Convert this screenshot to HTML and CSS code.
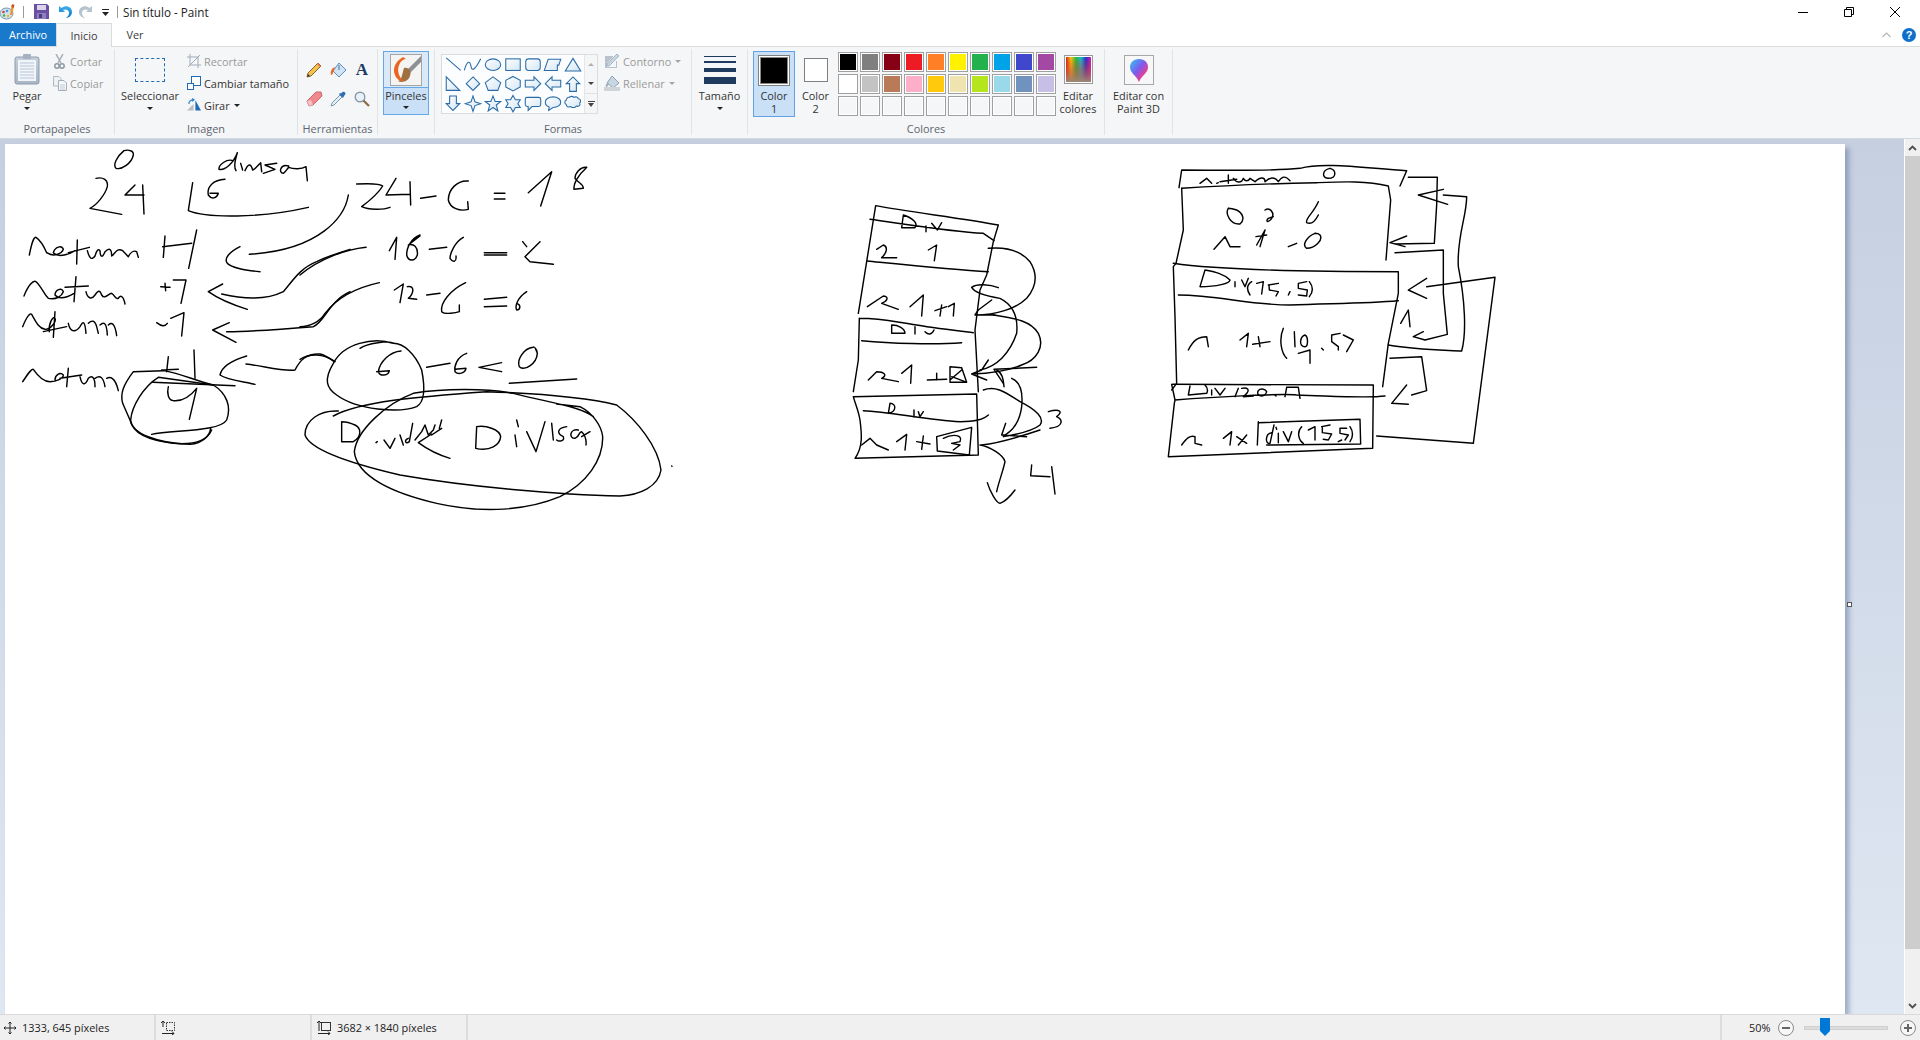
FILE: index.html
```html
<!DOCTYPE html>
<html lang="es">
<head>
<meta charset="utf-8">
<title>Sin título - Paint</title>
<link rel="stylesheet" href="styles.css">
</head>
<body>
<svg class="defs" width="0" height="0">
  <defs>
    <linearGradient id="shp" x1="0" y1="0" x2="1" y2="1"><stop offset="0" stop-color="#ffffff"/><stop offset="1" stop-color="#d4e6f4"/></linearGradient>
    <linearGradient id="clip" x1="0" y1="0" x2="0" y2="1"><stop offset="0" stop-color="#c4cfdc"/><stop offset="1" stop-color="#a8b6c6"/></linearGradient>
    <linearGradient id="spec" x1="0" y1="0" x2="0" y2="1"><stop offset="0" stop-color="#ff0000" stop-opacity="0"/><stop offset="1" stop-color="#9a8a78"/></linearGradient>
    <linearGradient id="rainbow" x1="0" y1="0" x2="1" y2="0"><stop offset="0" stop-color="#e02020"/><stop offset=".2" stop-color="#f0d010"/><stop offset=".4" stop-color="#20c040"/><stop offset=".6" stop-color="#10c0d0"/><stop offset=".8" stop-color="#2030d0"/><stop offset="1" stop-color="#d020c0"/></linearGradient>
    <linearGradient id="balloon" x1="0" y1="0" x2="1" y2="1"><stop offset="0" stop-color="#30c8f0"/><stop offset=".45" stop-color="#7a5cf0"/><stop offset=".75" stop-color="#f03c90"/><stop offset="1" stop-color="#f08a20"/></linearGradient>
    <linearGradient id="blueA" x1="0" y1="0" x2="0" y2="1"><stop offset="0" stop-color="#3db0ee"/><stop offset="1" stop-color="#0e76c8"/></linearGradient>
  </defs>
</svg>

<header class="titlebar">
  <svg class="ti" width="16" height="16" viewBox="0 0 16 16"><ellipse cx="6.5" cy="9.5" rx="6.5" ry="5.5" fill="#cfe3ee" stroke="#7b97ab"/><circle cx="3.5" cy="8" r="1.3" fill="#d8413a"/><circle cx="7" cy="7" r="1.3" fill="#3d9be0"/><circle cx="4" cy="11.5" r="1.3" fill="#4cb050"/><circle cx="8" cy="12" r="1.2" fill="#f0b020"/><path d="M13 1L11 11" stroke="#e9963a" stroke-width="2.4"/><path d="M13.4 .5l-1 3" stroke="#c0552a" stroke-width="2.4"/></svg>
  <span class="qsep qsep-a"></span>
  <svg class="save" width="15" height="15" viewBox="0 0 15 15"><path d="M0 0H13L15 2V15H0Z" fill="#6a4fa3"/><rect x="3" y="1" width="9" height="5" fill="#d9d4ea"/><rect x="3" y="9" width="9" height="6" fill="#8f7fbe"/><rect x="5" y="10" width="3" height="4" fill="#4b3a80"/></svg>
  <svg class="undo" width="14" height="14" viewBox="0 0 14 14"><path d="M1 1V7H7L5 5C8 3.500 11 5 11 8C11 10 10 11.500 8 13C12 12.500 14 10 14 7C14 2 8 -.5 3.500 3Z" fill="url(#blueA)"/></svg>
  <svg class="redo" width="14" height="14" viewBox="0 0 14 14"><path d="M13 1V7H7L9 5C6 3.500 3 5 3 8C3 10 4 11.500 6 13C2 12.500 0 10 0 7C0 2 6 -.5 10.500 3Z" fill="#b7c4d0"/></svg>
  <svg class="qdrop" width="7" height="7" viewBox="0 0 7 7"><path d="M0 0H7V1H0ZM0 3H7L3.500 7Z" fill="#222"/></svg>
  <span class="qsep qsep-b"></span>
  <span class="wintitle">Sin título - Paint</span>
  <div class="winctl">
    <svg width="10" height="10" viewBox="0 0 10 10"><path d="M0 5.500H10" stroke="#000" fill="none"/></svg>
    <svg width="10" height="10" viewBox="0 0 10 10"><path d="M.5 2.500H7.500V9.500H.5ZM2.500 2.500V.5H9.500V7.500H7.500" stroke="#000" fill="none"/></svg>
    <svg width="10" height="10" viewBox="0 0 10 10"><path d="M0 0L10 10M10 0L0 10" stroke="#000" fill="none"/></svg>
  </div>
</header>

<nav class="tabs">
  <span class="tab tab-file">Archivo</span>
  <span class="tab tab-on">Inicio</span>
  <span class="tab tab-off">Ver</span>
  <div class="help-wrap">
    <svg width="9" height="6" viewBox="0 0 9 6"><path d="M.5 5L4.500 1L8.500 5" stroke="#b5b5b5" fill="none" stroke-width="1.200"/></svg>
    <span class="help">?</span>
  </div>
</nav>

<section class="ribbon">
  <div class="group g-clip">
    <div class="g-body">
      <div class="big b-pegar">
        <div class="big-ico">
          <svg width="26" height="31" viewBox="0 0 26 31"><rect x="1" y="3" width="24" height="27" rx="2" fill="url(#clip)" stroke="#8d9cae"/><rect x="4" y="6" width="18" height="21" fill="#f1f5fa"/><path d="M6 9H20M6 12H20M6 15H20M6 18H20M6 21H20M6 24H20" stroke="#b9c7d6"/><rect x="9" y="0" width="8" height="5" rx="1" fill="#a5b2c1"/></svg>
        </div>
        <span class="blabel">Pegar</span>
        <i class="caret"></i>
      </div>
      <div class="smalls s-clip">
        <div class="sm dis"><svg width="14" height="15" viewBox="0 0 14 15"><path d="M3 0L8 9M10 0L5 9" stroke="#a3aeb9" stroke-width="1.500" fill="none"/><circle cx="4" cy="12" r="2.200" fill="none" stroke="#8c98a5" stroke-width="1.500"/><circle cx="9" cy="12" r="2.200" fill="none" stroke="#8c98a5" stroke-width="1.500"/></svg><span>Cortar</span></div>
        <div class="sm dis"><svg width="14" height="15" viewBox="0 0 14 15"><path d="M.5.5H6L8 2.500V10H.5Z" fill="#eef1f5" stroke="#aeb8c3"/><path d="M5.500 4.500H11L13.500 7V14.500H5.500Z" fill="#f5f7f9" stroke="#a3aeb9"/><path d="M7 9H12M7 11H12M7 13H12" stroke="#c3ccd5"/></svg><span>Copiar</span></div>
      </div>
    </div>
    <div class="g-label">Portapapeles</div>
  </div>

  <div class="group g-img">
    <div class="g-body">
      <div class="big b-sel">
        <div class="big-ico"><span class="dashbox"></span></div>
        <span class="blabel">Seleccionar</span>
        <i class="caret"></i>
      </div>
      <div class="smalls s-img">
        <div class="sm dis"><svg width="14" height="14" viewBox="0 0 14 14"><path d="M3 0V11H14M0 3H11V14M1 13L13 1" stroke="#9fabb7" fill="none"/></svg><span>Recortar</span></div>
        <div class="sm"><svg width="14" height="14" viewBox="0 0 14 14"><rect x="4.500" y=".5" width="9" height="9" fill="#fff" stroke="#1f6bb5"/><rect x=".5" y="7.500" width="6" height="6" fill="#fff" stroke="#1f6bb5"/></svg><span>Cambiar tamaño</span></div>
        <div class="sm"><svg width="15" height="14" viewBox="0 0 15 14"><path d="M0 13L7 6V13Z" fill="#b9bec4"/><path d="M9 2L15 13H9Z" fill="#1f6bb5"/><path d="M2 6C2 3 4 1.500 7 1.500M5.500 0L7.500 1.500L5.500 3" stroke="#2f85d0" fill="none" stroke-width="1.300"/></svg><span>Girar</span><i class="caret caret-in"></i></div>
      </div>
    </div>
    <div class="g-label">Imagen</div>
  </div>

  <div class="group g-tools">
    <div class="g-body tools">
      <svg width="16" height="16" viewBox="0 0 16 16"><path d="M1 15L2 11L12 1L15 4L5 14Z" fill="#f2c14f" stroke="#8b6a2a"/><path d="M11 2L14 5L15 4L12 1Z" fill="#e26a5e"/><path d="M1 15L2 12L4 14Z" fill="#333"/></svg>
      <svg width="16" height="16" viewBox="0 0 16 16"><path d="M9 1L16 8L9 15L3 9Z" fill="#cfe4f5" stroke="#5f8fb8"/><path d="M9 3V8" stroke="#3f6f9a"/><path d="M5 5C2 6 0 9 1 13C3 13 3 10 4 8Z" fill="#ea6a2a"/></svg>
      <span class="glyphA">A</span>
      <svg width="17" height="16" viewBox="0 0 17 16"><path d="M1 10L10 1H15L16 5L7 14L3 15Z" fill="#f0888c" stroke="#c76a6e"/><path d="M1 10L3 15L7 14L5 9Z" fill="#f4c0c2"/></svg>
      <svg width="16" height="16" viewBox="0 0 16 16"><path d="M10 4L12 6L4 14L1 15L2 12Z" fill="#e4eef6" stroke="#7d97ad"/><path d="M9 3L13 7L14 5L15.500 3C15.500 1 14 .5 12.500 1L11 2.500L10 2Z" fill="#2a6fb5"/></svg>
      <svg width="16" height="16" viewBox="0 0 16 16"><circle cx="6" cy="6" r="4.800" fill="#e6f1f9" stroke="#8a9aa8" stroke-width="1.400"/><path d="M9.500 9.500L15 15" stroke="#8a6a3f" stroke-width="2.200"/></svg>
    </div>
    <div class="g-label">Herramientas</div>
  </div>

  <div class="group g-brush">
    <div class="brushbtn">
      <div class="brush-top">
        <svg width="32" height="32" viewBox="0 0 32 32"><rect x=".5" y=".5" width="31" height="31" fill="#f4f4f2" stroke="#a5a5a5"/><path d="M31 2L17 16L20 19L31 8Z" fill="#8d9197"/><path d="M14 14C19 13 22 17 20 22C18 28 11 29 8 27C12 26 12 20 14 14Z" fill="#a0703f"/><path d="M13 3C6 7 2 14 5 21C7 26 10 27 14 27C9 24 6 16 10 9C11 7 14 5 16 5Z" fill="#ea6420"/></svg>
      </div>
      <div class="brush-bot"><span class="blabel">Pinceles</span><i class="caret"></i></div>
    </div>
  </div>

  <div class="group g-shapes">
    <div class="g-body">
      <div class="gallery">
        <div class="shapes">
          <svg class="sh" viewBox="0 0 20 20"><path d="M3 3L18 16"/></svg>
          <svg class="sh" viewBox="0 0 20 20"><path class="nf" d="M1 16C4 5 7 6 8 12C9 18 13 14 18 4"/></svg>
          <svg class="sh" viewBox="0 0 20 20"><ellipse cx="10" cy="10" rx="8" ry="6"/></svg>
          <svg class="sh" viewBox="0 0 20 20"><rect x="2.500" y="4" width="15" height="12"/></svg>
          <svg class="sh" viewBox="0 0 20 20"><rect x="2.500" y="4" width="15" height="12" rx="3"/></svg>
          <svg class="sh" viewBox="0 0 20 20"><path d="M1 16L5 4.500H18L16 10.500H14.500V16Z"/></svg>
          <svg class="sh" viewBox="0 0 20 20"><path d="M10 3.500L18 16.500H2Z"/></svg>

          <svg class="sh" viewBox="0 0 20 20"><path d="M3 3V17H17Z"/></svg>
          <svg class="sh" viewBox="0 0 20 20"><path d="M10 3L17 10L10 17L3 10Z"/></svg>
          <svg class="sh" viewBox="0 0 20 20"><path d="M10 3L18 9L15 17H5L2 9Z"/></svg>
          <svg class="sh" viewBox="0 0 20 20"><path d="M10 2.500L17.500 6.500V13.500L10 17.500L2.500 13.500V6.500Z"/></svg>
          <svg class="sh" viewBox="0 0 20 20"><path d="M2 6.500H11V3L18 10L11 17V13.500H2Z"/></svg>
          <svg class="sh" viewBox="0 0 20 20"><path d="M18 6.500H9V3L2 10L9 17V13.500H18Z"/></svg>
          <svg class="sh" viewBox="0 0 20 20"><path d="M6.500 18V10H3L10 3L17 10H13.500V18Z"/></svg>

          <svg class="sh" viewBox="0 0 20 20"><path d="M6.500 2V10H3L10 17L17 10H13.500V2Z"/></svg>
          <svg class="sh" viewBox="0 0 20 20"><path d="M10 2L12 8L18 10L12 12L10 18L8 12L2 10L8 8Z"/></svg>
          <svg class="sh" viewBox="0 0 20 20"><path d="M10 2L12.200 7.800H18L13.400 11.400L15 17.500L10 14L5 17.500L6.600 11.400L2 7.800H7.800Z"/></svg>
          <svg class="sh" viewBox="0 0 20 20"><path d="M10 1.500L12.500 6H17.500L15 10L17.500 14H12.500L10 18.500L7.500 14H2.500L5 10L2.500 6H7.500Z"/></svg>
          <svg class="sh" viewBox="0 0 20 20"><path d="M4 3.500H16Q18 3.500 18 5.500V11Q18 13 16 13H9L5 17V13H4Q2 13 2 11V5.500Q2 3.500 4 3.500Z"/></svg>
          <svg class="sh" viewBox="0 0 20 20"><path d="M10 3C15 3 18 5.500 18 8.500C18 11.500 15 14 10 14L5.500 17L6 13.500C3.500 12.500 2 10.500 2 8.500C2 5.500 5 3 10 3Z"/></svg>
          <svg class="sh" viewBox="0 0 20 20"><path d="M6 3.500C8 2 10 2.500 11 3.500C13 2.500 15 3 15.500 5C18 5 18.500 8 17 9.500C18 12 15.500 13.500 13.500 12.500C12 14.500 9 14.500 7.500 13C5.500 14 3 13 3 11C1 10 1 7 3 6.500C3 4.500 5 3 6 3.500Z"/></svg>
        </div>
        <div class="gal-scroll">
          <span class="gs"><i class="tri-up"></i></span>
          <span class="gs"><i class="tri-dn"></i></span>
          <span class="gs gs-last"><i class="tri-bar"></i></span>
        </div>
      </div>
      <div class="smalls s-shape">
        <div class="sm dis sm16"><svg width="16" height="16" viewBox="0 0 16 16"><path d="M1 3H9V4L3 10V14H12V8H13V15H1Z" fill="#b9c2cc"/><path d="M3 11L13 1L15 3L5 13H3Z" fill="#c8d6e3" stroke="#8ea2b5" stroke-width=".7"/></svg><span>Contorno</span><i class="caret caret-in caret-dis"></i></div>
        <div class="sm dis sm16"><svg width="16" height="16" viewBox="0 0 16 16"><path d="M8 1L15 8L9 13L3 8Z" fill="#c8d6e3" stroke="#8ea2b5"/><path d="M0 12H16V16H0Z" fill="#cfd4d9"/><path d="M4 7C2 9 1 10 2 12C4 12 4 10 5 9Z" fill="#a5b0bb"/></svg><span>Rellenar</span><i class="caret caret-in caret-dis"></i></div>
      </div>
    </div>
    <div class="g-label">Formas</div>
  </div>

  <div class="group g-size">
    <div class="g-body">
      <div class="big b-size">
        <div class="big-ico"><div class="sizes"><i class="l1"></i><i class="l2"></i><i class="l3"></i><i class="l4"></i></div></div>
        <span class="blabel">Tamaño</span>
        <i class="caret"></i>
      </div>
    </div>
  </div>

  <div class="group g-colors">
    <div class="g-body">
      <div class="colorbtn on">
        <div class="big-ico c-ico"><span class="sw1"></span></div>
        <span class="blabel">Color<br>1</span>
      </div>
      <div class="colorbtn c2">
        <div class="big-ico c-ico"><span class="sw2"></span></div>
        <span class="blabel">Color<br>2</span>
      </div>
      <div class="palette">
        <i class="p c01"></i><i class="p c02"></i><i class="p c03"></i><i class="p c04"></i><i class="p c05"></i><i class="p c06"></i><i class="p c07"></i><i class="p c08"></i><i class="p c09"></i><i class="p c10"></i>
        <i class="p c11"></i><i class="p c12"></i><i class="p c13"></i><i class="p c14"></i><i class="p c15"></i><i class="p c16"></i><i class="p c17"></i><i class="p c18"></i><i class="p c19"></i><i class="p c20"></i>
        <i class="p"></i><i class="p"></i><i class="p"></i><i class="p"></i><i class="p"></i><i class="p"></i><i class="p"></i><i class="p"></i><i class="p"></i><i class="p"></i>
      </div>
      <div class="big b-edit">
        <div class="big-ico"><svg width="29" height="29" viewBox="0 0 29 29"><rect x=".5" y=".5" width="28" height="28" fill="#fff" stroke="#9a9a9a"/><rect x="2" y="2" width="25" height="25" fill="url(#rainbow)"/><rect x="2" y="2" width="25" height="25" fill="url(#spec)"/></svg></div>
        <span class="blabel">Editar<br>colores</span>
      </div>
    </div>
    <div class="g-label">Colores</div>
  </div>

  <div class="group g-3d">
    <div class="g-body">
      <div class="big b-3d">
        <div class="big-ico"><svg width="30" height="30" viewBox="0 0 30 30"><rect x=".5" y=".5" width="29" height="29" fill="#f7f7f7" stroke="#a8a8a8"/><path d="M15 4C21 4 24 8 24 12C24 18 18 20 15 27C12 20 6 18 6 12C6 8 9 4 15 4Z" fill="url(#balloon)"/></svg></div>
        <span class="blabel">Editar con<br>Paint 3D</span>
      </div>
    </div>
  </div>
</section>

<main class="workspace">
  <div class="viewport">
    <div class="canvas">
      <svg class="drawing" width="1840" height="870" viewBox="5 144 1840 870">
        <g class="ink" transform="translate(0 130) scale(.33333)">
          <path d="M372 62C350 80 338 105 348 115C365 120 395 100 400 75C402 62 385 58 372 62"/>
          <path d="M700 92C680 85 655 105 657 118C675 122 700 100 712 68C705 90 700 110 708 122M722 100L728 120M735 122C745 100 752 100 758 120C765 118 772 108 782 98L785 125M830 100L795 105L825 118L790 130M866 108C840 100 835 130 850 130C858 125 862 115 866 112C880 118 905 118 918 110L922 152"/>
          <path d="M288 145C310 140 325 150 322 170C315 195 290 225 270 235L365 253M405 165L375 195L432 195M428 165L432 252"/>
          <path d="M578 158L565 242C620 265 780 265 925 232M675 148C640 150 620 170 625 195C635 210 650 205 655 190L630 190"/>
          <path d="M1045 195C1035 260 960 360 748 373M720 350C690 365 670 385 682 400C700 415 740 422 780 425"/>
          <path d="M88 375C95 340 100 322 108 322C120 330 130 345 140 368C160 382 185 372 190 358C185 345 165 350 160 368C175 385 210 372 225 362M232 330L230 402M205 368L268 352M262 362C268 385 275 392 285 378C290 360 295 355 300 362C300 375 305 390 315 365C330 350 335 360 335 378C345 372 350 352 368 362L385 380C390 370 400 360 410 365L415 382"/>
          <path d="M488 350L575 340M495 318L490 382M590 300L566 415"/>
          <path d="M668 462L625 485C660 510 700 525 742 538M665 492C720 505 790 515 850 485C880 450 900 415 950 395C980 380 1010 370 1050 358"/>
          <path d="M72 498C85 465 100 450 108 455C125 470 130 490 145 505C170 510 185 498 190 485C185 470 165 480 165 495C180 512 205 500 222 490M228 440L222 515M195 472L265 468M258 485C262 505 275 510 285 495C295 480 300 480 305 495C315 510 325 490 335 490C345 495 345 510 355 505C360 495 370 495 375 522"/>
          <path d="M482 470L510 472M495 460L497 482M520 450L558 450L543 520"/>
          <path d="M688 578L638 600L708 637M680 605C760 605 880 595 940 590C975 575 985 515 1050 485"/>
          <path d="M68 590C80 560 90 548 95 553C105 570 115 595 135 598C150 600 170 575 165 565C160 555 145 580 148 605M165 545L160 622M130 605L200 590M205 580C210 605 225 610 240 590C250 570 255 575 258 610M265 580C275 570 285 570 290 590L295 610M300 585C310 575 320 575 322 615M325 585C335 575 345 580 350 617"/>
          <path d="M470 578C485 590 495 590 502 580M512 565L552 548L545 618"/>
          <path d="M68 755C85 730 95 715 100 718C115 740 130 755 150 755C170 755 190 745 190 735C180 725 165 735 165 750M205 715L200 770M180 745L245 735M240 740C245 765 255 770 265 745C275 735 285 740 285 770M285 745C300 735 310 740 315 770M320 745C330 740 345 740 355 782"/>
          <path d="M485 720L535 718M505 680L500 725M582 660L585 745M458 757L705 767"/>
          <path d="M740 678C700 690 665 710 660 735C680 750 730 755 765 763M738 702C790 708 850 725 885 720C900 690 920 670 960 672C975 675 990 685 1005 695"/>
          <path d="M400 725C370 765 360 790 368 820L390 870C400 910 440 930 520 940C580 945 620 935 635 900M400 725L490 722C540 730 580 750 640 765C680 790 695 830 680 870C660 905 520 900 455 913"/>
          <path d="M475 742C430 770 395 830 392 870C395 910 470 940 570 943C610 940 630 915 632 895M475 742L640 765"/>
          <path d="M505 770C500 790 505 810 520 812C550 815 570 800 590 775L568 868"/>
        </g>
        <g class="ink" transform="translate(300 130) scale(.33333)">
          <path d="M170 162C210 160 240 160 248 168C235 190 205 215 185 230C205 240 250 240 270 232M288 145L258 195L330 193M330 155L332 225M362 205L408 198"/>
          <path d="M505 153C470 150 445 180 445 210C450 235 480 245 505 238L503 215M583 190L615 190M583 207L615 207M685 188L755 125L722 228"/>
          <path d="M860 112C840 110 825 130 825 145C835 160 850 160 850 175L822 178C820 160 835 135 858 115"/>
          <path d="M268 362L290 322L285 388M360 315C335 325 320 350 320 375C325 395 345 395 352 375C355 350 340 340 325 345L360 318M388 358L440 352M490 322C465 335 450 370 450 385C460 400 470 395 468 378"/>
          <path d="M553 368L620 368M553 375L620 375M668 335L680 350M720 335L675 380L690 395L760 403"/>
          <path d="M283 480L310 462L300 518M322 470C345 465 342 490 325 505L350 508M380 495L420 490M497 458C450 480 420 520 425 545C435 555 470 548 478 545L478 525"/>
          <path d="M553 508L620 502M553 530L620 528M680 485C650 505 645 530 650 540C660 540 665 525 650 520"/>
          <path d="M198 352C140 358 60 385 0 435M238 458C160 475 110 505 75 550C60 575 30 590 0 590"/>
          <path d="M0 688C30 670 70 670 103 695M180 655C200 640 270 630 280 640C220 620 130 640 100 700C70 750 80 775 110 795C170 840 300 850 350 830C375 815 375 770 365 720C345 670 310 640 280 640"/>
          <path d="M303 663C270 665 240 695 235 725C240 740 265 738 268 722L230 725M380 712L450 700M500 670C470 680 462 710 465 725C475 735 495 730 498 715L465 718M537 712L605 698M537 712L605 725"/>
          <path d="M700 652C670 655 650 690 658 710C675 725 710 700 712 670C712 655 700 650 700 652M628 760L830 747"/>
          <path d="M100 858C180 815 350 800 560 785C700 790 850 800 950 825C1010 870 1075 950 1083 1020C1075 1070 1020 1095 960 1098C780 1095 500 1070 300 1035C150 1000 30 960 15 915C15 870 60 840 115 843"/>
          <path d="M880 860C840 830 760 820 640 790C560 775 430 775 340 790C260 820 170 900 163 965C170 1040 280 1090 410 1120C520 1145 660 1150 780 1100C860 1060 910 990 908 920C905 890 880 850 840 830L770 822"/>
          <path d="M125 875L125 935L160 935C185 920 185 895 165 885C150 878 130 875 125 875M228 938L232 935M252 930L270 955L285 925M300 915L310 945M325 925C312 930 315 945 328 935L338 880M345 930L365 905L375 885L385 915L400 900L405 885M395 915L425 895M425 870L418 895"/>
          <path d="M395 912L355 938C385 960 415 975 450 985"/>
          <path d="M530 890L527 955C570 965 600 945 602 920C600 900 560 885 530 890M650 870L655 890M645 915L650 950M680 905L708 965L735 875M755 880L760 930M800 890C770 895 770 910 790 920C795 935 775 935 770 930M835 900C810 895 805 925 825 925C840 920 835 905 845 905C855 915 860 925 858 945M845 920L870 905"/>
          <path d="M1115 1008L1116 1009"/>
        </g>
        <g class="ink" transform="translate(840 190) scale(.33333)">
          <path d="M107 47L55 370M107 47C200 65 370 85 475 105L460 155L440 255L420 300L405 420L415 605"/>
          <path d="M90 88C180 100 330 125 430 130L462 152M190 75L185 113L225 113C235 100 220 85 190 75M258 108L258 125M275 100L292 120L305 98"/>
          <path d="M110 178L130 165C145 170 140 190 125 203L170 203M265 180L290 165L283 212M82 213C200 225 340 240 445 245"/>
          <path d="M82 350L130 318C150 320 140 335 125 340L175 358M210 350L250 315L245 378M285 362L320 350M305 345L300 378M325 350L343 340L340 378"/>
          <path d="M445 175C500 170 540 180 570 215C595 255 590 290 560 325C530 355 470 375 405 375M455 330L415 360L405 375L465 375"/>
          <path d="M475 293C450 283 410 280 395 292C405 310 450 320 480 325C520 345 535 380 530 430C510 490 470 530 420 540M460 375C520 385 570 390 595 430C615 470 590 510 545 525C510 540 450 550 395 552M445 510L425 540L395 552L440 570"/>
          <path d="M462 538L590 532M462 538L490 580"/>
          <path d="M58 385C130 385 160 395 230 405C290 415 350 422 400 428M58 385L55 510L40 605M65 452C150 460 280 465 365 458"/>
          <path d="M155 405L155 430L195 430C195 415 175 405 155 405M225 410L225 432M255 425C265 435 275 435 282 420"/>
          <path d="M85 570L110 545C130 545 145 555 125 565L175 575M185 550L215 525L212 580M262 570L320 568M290 550L290 570"/>
          <path d="M330 530L365 533L380 577L330 577ZM330 570L365 540M335 560L375 575"/>
          <path d="M430 600C470 585 500 610 540 635C590 660 615 685 600 705C575 725 520 735 490 740M470 540C490 550 490 575 492 590M515 565C540 575 550 600 545 650C540 690 520 720 495 735L485 735L497 700M485 735L560 740"/>
          <path d="M40 620L410 612L415 795L45 805C70 770 65 730 60 690C55 660 45 640 40 620M70 662C150 665 260 690 360 695C400 695 430 690 445 675"/>
          <path d="M150 640L145 670C170 665 170 640 150 640M222 660L222 680M235 665L240 680L250 665"/>
          <path d="M65 765L90 745L110 765L145 780M170 755L200 733L195 780M230 755L270 762M250 738L245 778"/>
          <path d="M290 740L395 712L388 795L292 783ZM310 745C340 730 370 735 360 755L335 760L360 765L340 780"/>
          <path d="M425 765C470 760 510 750 600 720M625 665C660 655 670 665 650 680C670 690 670 710 630 715"/>
          <path d="M420 765C450 770 490 795 495 815C490 840 475 880 470 905M442 878C450 905 470 940 480 940C495 935 510 920 525 900M575 825L572 857L630 860M635 830L645 912"/>
        </g>
        <g class="ink" transform="translate(1150 150) scale(.33333)">
          <path d="M87 113L95 60C200 60 350 65 450 55C520 35 650 55 770 62L750 108"/>
          <path d="M95 115C200 108 400 100 500 98C580 95 650 92 715 108L722 150L708 330"/>
          <path d="M150 100L170 85L185 100M200 100L205 98M210 95L260 88M235 75L235 100M250 85C260 100 275 100 280 85C285 95 295 95 300 85L315 95C330 80 345 80 345 95C360 80 375 80 385 95C395 80 405 75 420 92"/>
          <path d="M540 55C515 60 515 85 535 85C560 85 560 60 540 55"/>
          <path d="M775 82L862 82L860 165L853 280L735 282M770 258L720 278L765 290M880 118L805 135L893 163"/>
          <path d="M880 135L950 140C950 200 920 260 925 350C945 450 950 550 935 603C880 600 800 600 715 585"/>
          <path d="M95 115L100 240L78 340L70 350L75 500L80 700L65 720"/>
          <path d="M70 340C200 360 500 365 745 365L745 430L715 580L698 710M85 435C200 435 300 465 420 465C550 460 650 460 745 452"/>
          <path d="M165 360L150 410C200 410 240 400 240 390C220 370 190 365 165 360M255 395L255 410M275 390L285 410L295 385M305 395C290 405 290 420 300 435M320 400L340 395L335 432M355 405L385 400M357 405L358 420L385 425L378 438M420 425L415 435M470 395L445 400L445 415L472 420L470 438L445 435M478 395C490 410 490 425 478 440"/>
          <path d="M235 175C225 190 240 225 270 222C285 210 280 190 260 180C245 175 235 175 235 175M345 180C360 170 375 190 365 205C355 220 345 215 355 205L370 200M505 155C490 190 465 205 470 218C485 225 495 215 505 195"/>
          <path d="M192 298L225 260L240 290L270 290M320 285L345 240L330 290M318 260L350 255M415 290L440 280M495 250C470 260 455 285 470 295C495 295 520 270 510 255C505 250 495 250 495 250"/>
          <path d="M735 308L880 300L880 430L892 553L825 570L790 560M752 520L775 480L780 530M820 545L790 560"/>
          <path d="M830 385L775 420L830 445M830 410L1035 382L970 880L680 858"/>
          <path d="M115 600C130 570 145 560 170 560L175 590M270 570L295 550L290 590M308 583L360 575M325 560L330 590M400 535C385 570 395 610 410 625M433 545L435 590M465 555C450 560 445 590 465 590C475 590 475 560 465 555M515 595L520 600M570 550L545 555L545 575L565 590L565 600M580 555L610 570L590 605M445 610L480 600L480 640"/>
          <path d="M68 703L670 705L668 895L55 920L73 760L75 750L65 703M75 750C200 740 400 730 440 735C550 738 650 745 705 738"/>
          <path d="M720 625L815 620L830 722L785 735M770 705L725 760L775 763"/>
          <path d="M120 708L115 735L170 730C175 720 170 710 165 705M185 720L185 735M195 715L210 735L225 715M265 715L255 740M275 715C300 710 300 725 280 740L310 738M325 722C315 740 345 745 350 725C345 715 330 715 325 722M375 735L378 738M410 712L405 740M410 712L445 712L450 745"/>
          <path d="M95 885C110 865 120 855 135 860L135 880L155 885M220 865L245 845L240 885M260 860L290 880M290 855L265 885"/>
          <path d="M325 815L322 885M325 818L630 808L632 882L350 885"/>
          <path d="M365 848C345 850 345 885 360 880L372 825M385 850L385 878M378 832L380 838M400 845L415 875L425 845M455 830C440 845 445 870 460 880M475 840L495 830L495 870M515 830L540 825M517 830L517 848L545 852L535 870L520 868M565 875L575 870M590 835L570 835L570 850L595 855L585 870M600 830C610 845 610 860 600 875"/>
        </g>
      </svg>
    </div>
    <span class="handle"></span>
  </div>
  <aside class="vscroll">
    <span class="vs-btn"><svg width="9" height="6" viewBox="0 0 9 6"><path d="M1 5L4.500 1.500L8 5" fill="none" stroke="#505050" stroke-width="1.800"/></svg></span>
    <span class="vs-thumb"></span>
    <span class="vs-track"></span>
    <span class="vs-btn"><svg width="9" height="6" viewBox="0 0 9 6"><path d="M1 1L4.500 4.500L8 1" fill="none" stroke="#505050" stroke-width="1.800"/></svg></span>
  </aside>
</main>

<footer class="status">
  <div class="st st-a"><svg width="12" height="12" viewBox="0 0 12 12"><path d="M6 0V12M0 6H12M4.500 1.500L6 0L7.500 1.500M4.500 10.500L6 12L7.500 10.500M1.500 4.500L0 6L1.500 7.500M10.500 4.500L12 6L10.500 7.500" fill="none" stroke="#222"/></svg><span>1333, 645 píxeles</span></div>
  <div class="st st-b"><svg width="14" height="14" viewBox="0 0 14 14"><path d="M2 0V6M0 2L2 0L4 2M1 12.500H13M11 10.500L13 12.500L11 14" fill="none" stroke="#222"/><rect x="5.500" y="1.500" width="8" height="8" fill="none" stroke="#333" stroke-dasharray="1.500 1"/></svg></div>
  <div class="st st-c"><svg width="14" height="14" viewBox="0 0 14 14"><path d="M2 0V10M0 2L2 0L4 2M1 12.500H13M11 10.500L13 12.500L11 14" fill="none" stroke="#222"/><rect x="4.500" y="1.500" width="9" height="8" fill="none" stroke="#333"/></svg><span>3682 × 1840 píxeles</span></div>
  <div class="st st-d"></div>
  <div class="st-zoom">
    <span class="zoomval">50%</span>
    <span class="zbtn"><i class="zh"></i></span>
    <span class="slider"><i class="knob"><svg width="10" height="18" viewBox="0 0 10 18"><path d="M0 0H10V13L5 18L0 13Z" fill="#0078d7"/></svg></i></span>
    <span class="zbtn"><i class="zh"></i><i class="zv"></i></span>
  </div>
</footer>
</body>
</html>
```

FILE: styles.css
```css
* { box-sizing: border-box; }
html { margin: 0; height: 1040px; overflow: hidden; }
body {
  margin: 0; width: 1920px; height: 1040px; overflow: hidden; background: #fff; color: #3b3b3b;
  font-family: "Open Sans", "Noto Sans", sans-serif; font-size: 10.9px;
  display: flex; flex-direction: column;
}
.defs { position: absolute; }
svg { display: block; flex: none; }
i { display: block; font-style: normal; }

.titlebar { height: 23px; display: flex; align-items: center; flex: none; }
.ti { margin-left: 0; }
.qsep { width: 1px; height: 12px; background: #9a9a9a; }
.qsep-a { margin-left: 7px; }
.save { margin-left: 10px; }
.undo { margin-left: 9px; }
.redo { margin-left: 7px; }
.qdrop { margin-left: 9px; margin-top: 2px; }
.qsep-b { margin-left: 8px; }
.wintitle { margin-left: 5px; font-size: 11.7px; color: #222; }
.winctl { margin-left: auto; display: flex; gap: 36px; padding-right: 20px; }

.tabs { height: 23px; display: flex; flex: none; position: relative; z-index: 1; }
.tab { display: flex; align-items: center; justify-content: center; }
.tab-file { width: 56px; background: #1979ca; color: #fff; }
.tab-on { width: 56px; height: 24px; background: #f5f6f7; border: 1px solid #dadbdc; border-bottom: 0; }
.tab-off { width: 32px; margin-left: 7px; }
.help-wrap { margin-left: auto; display: flex; align-items: center; gap: 11px; padding-right: 4px; }
.help {
  width: 14px; height: 14px; border-radius: 50%; background: #0f6fc9; color: #fff;
  font: bold 11px/14px "Liberation Sans", sans-serif; text-align: center;
}

.ribbon {
  height: 93px; flex: none; display: flex; background: #f5f6f7;
  border-top: 1px solid #dadbdc; border-bottom: 1px solid #d5d8de; padding-top: 2px;
}
.group { height: 86px; display: flex; flex-direction: column; border-right: 1px solid #e2e3e4; flex: none; }
.g-body { height: 71px; display: flex; flex: none; }
.g-label { height: 15px; line-height: 15px; text-align: center; color: #5d6570; padding-top: 1px; }
.g-clip { width: 115px; }
.g-img { width: 183px; }
.g-tools { width: 80px; }
.g-brush { width: 57px; padding: 2px 0 0 5px; }
.g-shapes { width: 257px; }
.g-size { width: 56px; }
.g-colors { width: 357px; }
.g-3d { width: 68px; }

.big { display: flex; flex-direction: column; align-items: center; flex: none; }
.big-ico { height: 40px; display: flex; align-items: center; justify-content: center; padding-top: 1px; }
.blabel { line-height: 13px; text-align: center; color: #333; white-space: nowrap; display: block; }
.caret { width: 0; height: 0; border: 3px solid transparent; border-top: 3px solid #222; border-bottom: 0; margin-top: 5px; }
.caret-in { margin: 1px 0 0 1px; }
.caret-dis { border-top-color: #a5a5a5; }
.b-pegar { width: 54px; }
.b-sel { width: 70px; }
.b-size { width: 55px; }
.b-edit { width: 44px; }
.b-3d { width: 67px; }
.dashbox { width: 30px; height: 24px; border: 1px dashed #1f6bb5; }

.smalls { padding-top: 1px; flex: none; }
.s-clip { margin-left: -1px; }
.s-img { margin-left: 2px; }
.s-shape { margin-left: 6px; }
.sm { height: 22px; display: flex; align-items: center; gap: 3px; color: #333; }
.sm svg { width: 14px; }
.sm16 svg { width: 16px; }
.sm span { white-space: nowrap; }
.dis, .dis span { color: #9a9a9a; }

.tools { display: grid; grid-template-columns: repeat(3, 24px); grid-auto-rows: 16px; row-gap: 13px; padding: 13px 0 0 4px; justify-items: center; }
.glyphA { font: bold 17px/16px "Liberation Serif", serif; color: #1f3a5f; }

.brushbtn { width: 46px; height: 64px; border: 1px solid #66a7e8; display: flex; flex-direction: column; }
.brush-top { height: 36px; background: #d9e9f8; display: flex; align-items: center; justify-content: center; border-bottom: 1px solid #66a7e8; }
.brush-top svg { margin-top: 1px; }
.brush-bot { flex: 1; background: #c9e0f7; display: flex; flex-direction: column; align-items: center; padding-top: 1px; }
.brush-bot .caret { margin-top: 4px; }

.gallery { width: 157px; height: 60px; margin: 5px 0 0 6px; display: flex; border: 1px solid #dcdcdc; background: #fff; flex: none; }
.shapes { width: 142px; display: flex; flex-wrap: wrap; align-content: flex-start; gap: 0; padding: 0 0 0 1px; background: #fbfdfe; }
.sh { width: 20px; height: 19.300px; fill: url(#shp); stroke: #2a6ca8; stroke-width: 1.100; }
.nf { fill: none; }
.gal-scroll { width: 13px; display: flex; flex-direction: column; background: #f5f6f7; border-left: 1px solid #e6e6e6; }
.gs { flex: 1; display: flex; align-items: center; justify-content: center; }
.gs-last { border-top: 1px solid #e0e0e0; }
.tri-up { width: 0; height: 0; border: 3px solid transparent; border-bottom: 3px solid #b0b0b0; border-top: 0; }
.tri-dn { width: 0; height: 0; border: 3px solid transparent; border-top: 3px solid #444; border-bottom: 0; }
.tri-bar { width: 7px; height: 1px; background: #444; margin-bottom: 4px; }
.tri-bar::after { content: ""; display: block; width: 0; height: 0; margin-top: 2px; border: 3.500px solid transparent; border-top: 4px solid #444; border-bottom: 0; }

.sizes { width: 32px; height: 28px; display: flex; flex-direction: column; }
.sizes i { background: #1f3a5f; }
.l1 { height: 1px; }
.l2 { height: 2px; margin-top: 4px; }
.l3 { height: 4px; margin-top: 5px; }
.l4 { height: 7px; margin-top: 5px; }

.colorbtn { display: flex; flex-direction: column; align-items: center; margin-top: 2px; height: 66px; flex: none; }
.colorbtn.on { width: 42px; margin-left: 5px; background: #c9e0f7; border: 1px solid #62a2e4; }
.colorbtn.c2 { width: 41px; }
.c-ico { height: 38px; padding-top: 0; }
.colorbtn.on .c-ico { height: 37px; }
.sw1 { width: 32px; height: 31px; background: #000; border: 2px solid #fff; outline: 1px solid #808080; outline-offset: -1px; box-shadow: inset 0 0 0 1px #888; }
.sw2 { width: 24px; height: 24px; background: #fff; border: 1px solid #808080; }
.palette { display: grid; grid-template-columns: repeat(10, 20px); grid-auto-rows: 20px; gap: 2px; margin: 3px 0 0 2px; flex: none; width: 218px; }
.p { border: 1px solid #a0a0a0; box-shadow: inset 0 0 0 1px #fff; background: #f5f6f7; }
.c01 { background: #000; } .c02 { background: #7f7f7f; } .c03 { background: #880015; } .c04 { background: #ed1c24; } .c05 { background: #ff7f27; }
.c06 { background: #fff200; } .c07 { background: #22b14c; } .c08 { background: #00a2e8; } .c09 { background: #3f48cc; } .c10 { background: #a349a4; }
.c11 { background: #fff; } .c12 { background: #c3c3c3; } .c13 { background: #b97a57; } .c14 { background: #ffaec9; } .c15 { background: #ffc90e; }
.c16 { background: #efe4b0; } .c17 { background: #b5e61d; } .c18 { background: #99d9ea; } .c19 { background: #7092be; } .c20 { background: #c8bfe7; }

.workspace { flex: 1; display: flex; min-height: 0; }
.viewport {
  flex: 1; position: relative; padding: 5px 0 0 5px; overflow: hidden;
  background: linear-gradient(#c5cfe0, #dfe7f2);
}
.canvas { width: 1840px; height: 870px; background: #fff; box-shadow: 4px 4px 5px rgba(80, 100, 140, .45); }
.drawing { overflow: hidden; }
.ink { fill: none; stroke: #000; stroke-width: 4.300px; stroke-linecap: round; stroke-linejoin: round; }
.handle { position: absolute; left: 1847px; top: 463px; width: 5px; height: 5px; background: #fff; border: 1px solid #555; }
.vscroll { width: 16px; background: #f0f0f0; border-left: 1px solid #fff; display: flex; flex-direction: column; align-items: center; flex: none; }
.vs-btn { height: 17px; display: flex; align-items: center; justify-content: center; }
.vs-thumb { width: 15px; height: 793px; background: #cdcdcd; flex: none; }
.vs-track { flex: 1; }

.status { height: 26px; flex: none; display: flex; background: #f0f0f0; border-top: 1px solid #d9d9d9; color: #222; }
.st { display: flex; align-items: center; border-right: 2px solid #dcdcdc; flex: none; }
.st-a { width: 156px; padding-left: 4px; gap: 6px; }
.st-b { width: 156px; padding-left: 5px; }
.st-c { width: 156px; padding-left: 5px; gap: 6px; }
.st-d { width: 1254px; }
.st-zoom { flex: 1; display: flex; align-items: center; padding-left: 27px; }
.zoomval { width: 29px; }
.zbtn { width: 16px; height: 16px; border-radius: 50%; border: 1px solid #8a8a8a; background: #f7f7f7; position: relative; flex: none; }
.zh { position: absolute; left: 3px; top: 6px; width: 8px; height: 2px; background: #666; }
.zv { position: absolute; left: 6px; top: 3px; width: 2px; height: 8px; background: #666; }
.slider { width: 84px; height: 4px; margin: 0 12px 0 10px; background: #dcdcdc; border: 1px solid #cfcfcf; position: relative; flex: none; }
.knob { position: absolute; left: 15px; top: -9px; }
```
